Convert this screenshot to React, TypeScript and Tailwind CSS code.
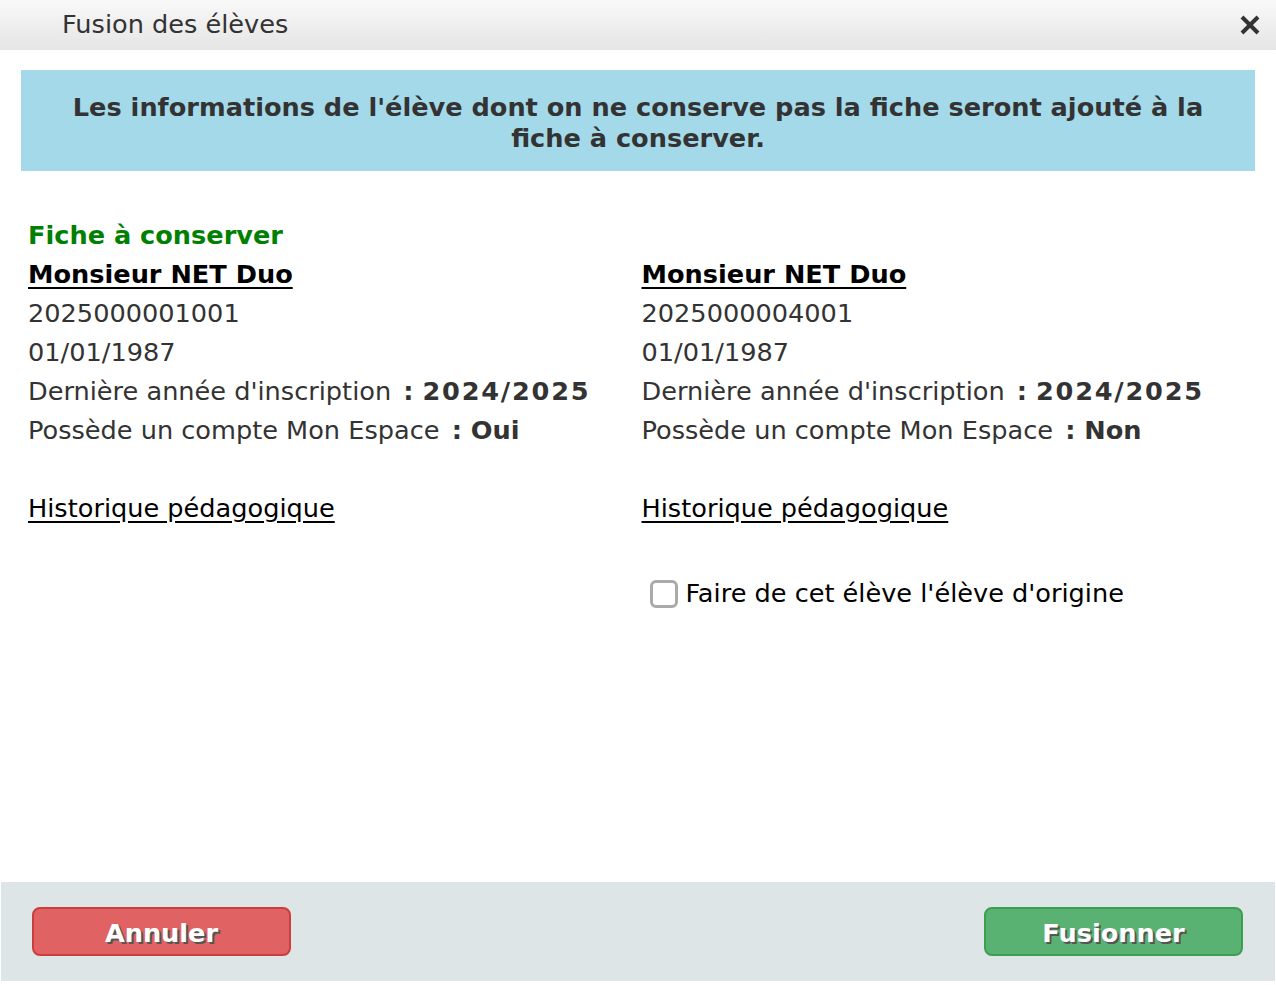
import React from 'react';

const font = { fontFamily: '"DejaVu Sans", Verdana, sans-serif' };

interface FicheProps {
  keep?: boolean;
  number: string;
  account: string;
}

const Fiche: React.FC<FicheProps> = ({ keep, number, account }) => (
  <div className="flex flex-col text-[25.6px] leading-[39px] text-[#333]">
    {keep ? (
      <div className="font-bold text-[#008000]">Fiche à conserver</div>
    ) : (
      <div className="h-[39px]" />
    )}
    <div className="font-bold text-black underline underline-offset-[4px] decoration-[2px]">Monsieur NET Duo</div>
    <div>{number}</div>
    <div>01/01/1987</div>
    <div>
      Dernière année d'inscription <span className="font-bold pl-[4px]">: <span className="tracking-[1.8px]">2024/2025</span></span>
    </div>
    <div>
      Possède un compte Mon Espace <span className="font-bold pl-[4px]">: {account}</span>
    </div>
    <div className="h-[39px]" />
    <div className="text-black underline underline-offset-[4px]">Historique pédagogique</div>
    {!keep && (
      <label className="flex items-center gap-[8px] mt-[46px] ml-[8px] text-black">
        <span className="w-[28px] h-[28px] rounded-[6px] border-[3px] border-[#aaaaaa] bg-white" />
        <span>Faire de cet élève l'élève d'origine</span>
      </label>
    )}
  </div>
);

export default function App() {
  return (
    <div className="w-[1276px] h-[985px] bg-white flex flex-col" style={font}>
      <div className="h-[50px] shrink-0 bg-gradient-to-b from-[#f9f9f9] to-[#e5e5e5] flex items-center justify-between pl-[62px] pr-[15px]">
        <span className="text-[25.6px] text-[#333] -mt-[1px]">Fusion des élèves</span>
        <svg width="22" height="22" viewBox="0 0 22 22">
          <path d="M3 3 L19 19 M19 3 L3 19" stroke="#333" strokeWidth="4" strokeLinecap="butt" />
        </svg>
      </div>

      <div className="flex-1 px-[21px] pt-[20px]">
        <div className="bg-[#a4d9ea] px-[14px] pt-[22px] pb-[17px] text-center font-bold text-[25.6px] leading-[31px] text-[#333]">
          Les informations de l'élève dont on ne conserve pas la fiche seront ajouté à la fiche à conserver.
        </div>

        <div className="grid grid-cols-2 pl-[7px] mt-[45px]">
          <Fiche keep number="2025000001001" account="Oui" />
          <Fiche number="2025000004001" account="Non" />
        </div>
      </div>

      <div className="h-[99px] shrink-0 mx-[1px] mb-[4px] bg-[#dee5e7] flex items-center justify-between pl-[31px] pr-[32px]">
        <button className="w-[259px] h-[49px] pt-[3px] rounded-[8px] border-2 border-[#cc3d3d] bg-[#e06262] text-white font-bold text-[25.6px] [text-shadow:2px_2px_0_#555]">
          Annuler
        </button>
        <button className="w-[259px] h-[49px] pt-[3px] rounded-[8px] border-2 border-[#3c9e4f] bg-[#59b272] text-white font-bold text-[25.6px] [text-shadow:2px_2px_0_#555]">
          Fusionner
        </button>
      </div>
    </div>
  );
}
